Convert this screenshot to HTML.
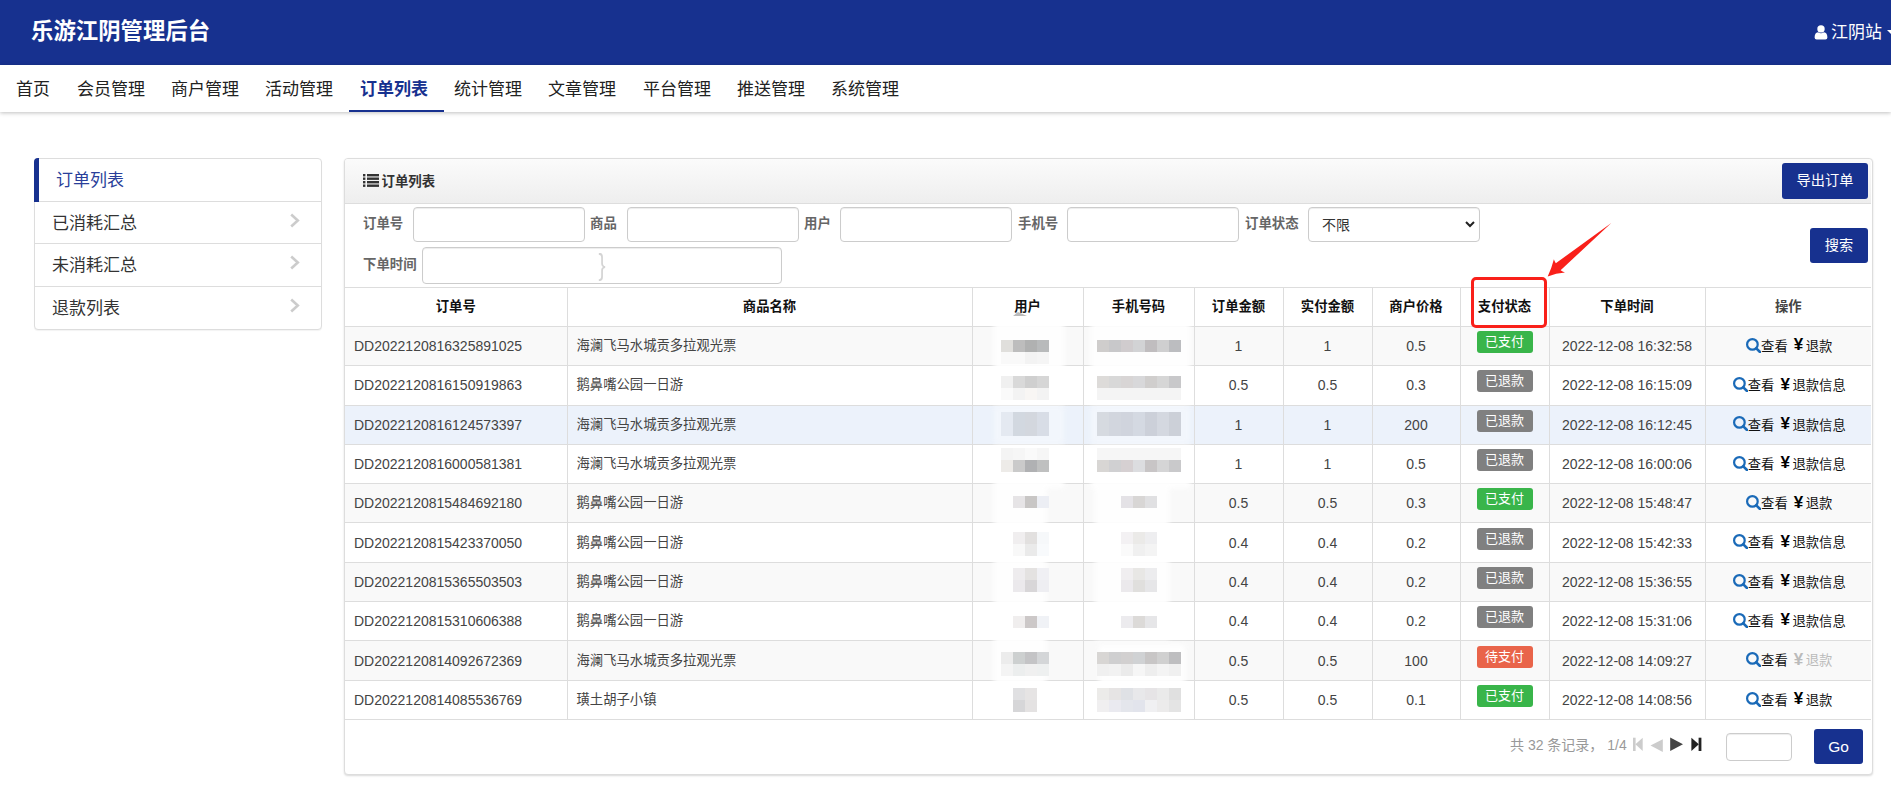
<!DOCTYPE html>
<html lang="zh-CN">
<head>
<meta charset="utf-8">
<title>乐游江阴管理后台</title>
<style>
*{box-sizing:border-box;margin:0;padding:0}
html,body{width:1891px;height:795px;overflow:hidden;background:#fff}
body{font-family:"Liberation Sans","Noto Sans CJK SC",sans-serif;font-size:14px;color:#333;position:relative}
.top{position:absolute;left:0;top:0;width:1891px;height:65px;background:#17318f}
.brand{position:absolute;left:31px;top:16px;font-size:22.4px;line-height:32px;font-weight:bold;color:#fff;letter-spacing:0px;white-space:nowrap}
.user{position:absolute;left:1831px;top:19px;font-size:17px;line-height:28px;color:#fff;white-space:nowrap}
.usericon{position:absolute;left:1813.5px;top:25px;width:14px;height:15px}
.caret{position:absolute;left:1887px;top:30px;width:8px;height:4px}
.nav{position:absolute;left:0;top:65px;width:1891px;height:47px;background:#fff;box-shadow:0 1px 4px rgba(0,0,0,.25)}
.nav a{position:absolute;top:1px;height:47px;line-height:47px;font-size:17px;color:#222;white-space:nowrap;text-decoration:none}
.nav a.on{color:#17318f;font-weight:bold}
.nav .bar{position:absolute;left:349px;top:44.5px;width:95px;height:2.5px;background:#17318f}
.side{position:absolute;left:34px;top:158px;width:288px;height:172px;border:1px solid #ddd;border-radius:4px;background:#fff;box-shadow:0 1px 1px rgba(0,0,0,.05);overflow:hidden}
.side div{position:relative;height:43px;line-height:44px;border-bottom:1px solid #ddd;font-size:17px;color:#333;padding-left:17px}
.side div:last-child{border-bottom:0}
.side div.on{color:#2a3f9a;padding-left:21px;height:43px}
.sbar{position:absolute;left:34px;top:158px;width:5px;height:44px;background:#17318f;border-radius:4px 0 0 0}
.side div svg{position:absolute;left:254px;top:11px;width:12px;height:15px}
.panel{position:absolute;left:344px;top:158px;width:1529px;height:617px;border:1px solid #ddd;border-radius:4px;background:#fff;box-shadow:0 1px 2px rgba(0,0,0,.15)}
.phead{position:absolute;left:0;top:0;width:1526px;height:45px;background:linear-gradient(#fbfbfb,#eee);border-bottom:1px solid #ddd;border-radius:3px 3px 0 0}
.phead b{position:absolute;left:36.5px;top:12px;font-size:13.4px;line-height:22px;color:#333}
.btn{position:absolute;background:#17318f;color:#fff;border-radius:3px;text-align:center;font-size:14.2px}
.lbl{position:absolute;font-size:13.4px;font-weight:bold;color:#666;line-height:20px;white-space:nowrap}
.inp{position:absolute;height:35px;border:1px solid #ccc;border-radius:4px;background:#fff;box-shadow:inset 0 1px 1px rgba(0,0,0,.075)}
table{position:absolute;left:0;top:128px;width:1526px;border-collapse:collapse;table-layout:fixed}
th,td{border:1px solid #ddd;height:39.3px;line-height:20px;font-size:13.33px;text-align:center;white-space:nowrap;overflow:hidden;padding:0}
th{font-weight:bold;color:#111;height:39px;padding-bottom:1px}
th.op{color:#444}
td{color:#444}
td.n{font-size:14px}
td.l{text-align:left;padding-left:9px}
tr td:first-child,tr th:first-child{border-left:0}
tr td:last-child,tr th:last-child{border-right:0}
tbody tr:nth-child(odd){background:#f9f9f9}
tbody tr.hl{background:#ecf2fb}
.tag{display:inline-block;width:56px;height:22px;line-height:21px;border-radius:3px;color:#fff;font-size:13px;position:relative;top:-4px}
.g{background:#39b54a}.k{background:#808080}.r{background:#e9644a}
.mz{display:inline-block;height:16px;background:#d4d4d4;vertical-align:middle}
.licon{position:absolute;left:17.5px;top:15px;width:16px;height:13px}
.sel span{position:absolute;left:13px;top:7px;font-size:14px;line-height:20px;color:#333}
.sel svg{position:absolute;right:4px;top:13px;width:10px;height:7px}
.brace{position:absolute;left:174px;top:1px;font-size:30px;line-height:32px;color:#d4d4d4;font-weight:normal;transform:scaleX(.7)}
.act .a{position:relative;top:1px;padding-left:2px;display:inline-flex;align-items:center;height:20px;line-height:20px;font-size:13.33px;color:#111}
.act .mag{width:15px;height:15px;flex:none;position:relative;top:0px}
.act span,.act em{font-style:normal;color:#111;position:relative;top:1.6px}
.act b{font-weight:bold;color:#000;font-size:17px;line-height:20px;margin-left:6px;margin-right:2.5px;position:relative;top:0px}
.act b.dis,.act em.dis{color:#bbb}
.pg{position:absolute;left:1165px;top:576px;font-size:14px;line-height:20px;color:#999;white-space:nowrap}
.pgi{position:absolute;left:1285px;top:576px;width:75px;height:18px}
.mosaic{position:absolute;left:972px;top:300px;width:230px;height:430px}
.redbox{position:absolute;left:1471px;top:277px;width:76px;height:51px;border:3px solid #f9201a;border-radius:5px}
.arrow{position:absolute;left:1540px;top:215px;width:80px;height:70px}
</style>
</head>
<body>
<div class="top">
  <div class="brand">乐游江阴管理后台</div>
  <svg class="usericon" viewBox="0 0 14 15"><circle cx="7" cy="3.9" r="3.7" fill="#fff"/><path d="M0.6 12.6 Q0.6 7.6 4 7.2 Q7 9.4 10 7.2 Q13.4 7.6 13.4 12.6 Q13.4 14.6 11.4 14.6 H2.6 Q0.6 14.6 0.6 12.6 Z" fill="#fff"/></svg><svg class="caret" viewBox="0 0 8 4"><path d="M0 0 H8 L4 4 Z" fill="#fff"/></svg>
  <div class="user">江阴站</div>
</div>
<div class="nav">
  <a style="left:16px">首页</a>
  <a style="left:77px">会员管理</a>
  <a style="left:171px">商户管理</a>
  <a style="left:265px">活动管理</a>
  <a class="on" style="left:360px">订单列表</a>
  <a style="left:454px">统计管理</a>
  <a style="left:548px">文章管理</a>
  <a style="left:643px">平台管理</a>
  <a style="left:737px">推送管理</a>
  <a style="left:831px">系统管理</a>
  <span class="bar"></span>
</div>
<div class="side">
  <div class="on">订单列表</div>
  <div style="height:42px">已消耗汇总<svg viewBox="0 0 12 15"><path d="M2.2 1.5 L8.8 7.5 L2.2 13.5" fill="none" stroke="#ccc" stroke-width="2.6"/></svg></div>
  <div>未消耗汇总<svg viewBox="0 0 12 15"><path d="M2.2 1.5 L8.8 7.5 L2.2 13.5" fill="none" stroke="#ccc" stroke-width="2.6"/></svg></div>
  <div style="height:42px">退款列表<svg viewBox="0 0 12 15"><path d="M2.2 1.5 L8.8 7.5 L2.2 13.5" fill="none" stroke="#ccc" stroke-width="2.6"/></svg></div>
</div>
<div class="sbar"></div>
<div class="panel">
  <div class="phead"><b>订单列表</b></div>
  <svg class="licon" viewBox="0 0 16 13"><g fill="#333"><rect x="0" y="0" width="2.4" height="2.4"/><rect x="4" y="0" width="12" height="2.4"/><rect x="0" y="3.5" width="2.4" height="2.4"/><rect x="4" y="3.5" width="12" height="2.4"/><rect x="0" y="7" width="2.4" height="2.4"/><rect x="4" y="7" width="12" height="2.4"/><rect x="0" y="10.5" width="2.4" height="2.4"/><rect x="4" y="10.5" width="12" height="2.4"/></g></svg>
  <div class="btn" style="left:1437px;top:4px;width:86px;height:36px;line-height:35px">导出订单</div>
  <div class="lbl" style="left:18px;top:55px">订单号</div><div class="inp" style="left:68px;top:48px;width:172px"></div>
  <div class="lbl" style="left:245px;top:55px">商品</div><div class="inp" style="left:282px;top:48px;width:172px"></div>
  <div class="lbl" style="left:459px;top:55px">用户</div><div class="inp" style="left:495px;top:48px;width:172px"></div>
  <div class="lbl" style="left:673px;top:55px">手机号</div><div class="inp" style="left:722px;top:48px;width:172px"></div>
  <div class="lbl" style="left:900px;top:55px">订单状态</div>
  <div class="inp sel" style="left:963px;top:48px;width:172px"><span>不限</span><svg viewBox="0 0 10 7"><path d="M1 1 L5 5 L9 1" fill="none" stroke="#222" stroke-width="2"/></svg></div>
  <div class="lbl" style="left:18px;top:96px">下单时间</div>
  <div class="inp" style="left:77px;top:88px;width:360px;height:37px"><span class="brace">}</span></div>
  <div class="btn" style="left:1465px;top:69px;width:58px;height:35px;line-height:34px">搜索</div>
  <table>
  <colgroup><col style="width:222px"><col style="width:405px"><col style="width:111px"><col style="width:111px"><col style="width:89px"><col style="width:89px"><col style="width:88px"><col style="width:89px"><col style="width:156px"><col style="width:166px"></colgroup>
  <thead><tr><th>订单号</th><th>商品名称</th><th>用户</th><th>手机号码</th><th>订单金额</th><th>实付金额</th><th>商户价格</th><th>支付状态</th><th>下单时间</th><th class="op">操作</th></tr></thead>
  <tbody>
    <tr><td class="l n">DD2022120816325891025</td><td class="l">海澜飞马水城贡多拉观光票</td><td></td><td></td><td class="n">1</td><td class="n">1</td><td class="n">0.5</td><td><span class="tag g">已支付</span></td><td class="n">2022-12-08 16:32:58</td><td class="act"><div class="a"><svg class="mag" viewBox="0 0 15 15"><circle cx="6.4" cy="6.4" r="5.3" fill="none" stroke="#1a6ab8" stroke-width="2.2"/><path d="M10.3 10.3 L14 14" stroke="#1a6ab8" stroke-width="2.6" stroke-linecap="round"/></svg><span>查看</span><b>¥</b><em>退款</em></div></td></tr>
    <tr><td class="l n">DD2022120816150919863</td><td class="l">鹅鼻嘴公园一日游</td><td></td><td></td><td class="n">0.5</td><td class="n">0.5</td><td class="n">0.3</td><td><span class="tag k">已退款</span></td><td class="n">2022-12-08 16:15:09</td><td class="act"><div class="a"><svg class="mag" viewBox="0 0 15 15"><circle cx="6.4" cy="6.4" r="5.3" fill="none" stroke="#1a6ab8" stroke-width="2.2"/><path d="M10.3 10.3 L14 14" stroke="#1a6ab8" stroke-width="2.6" stroke-linecap="round"/></svg><span>查看</span><b>¥</b><em>退款信息</em></div></td></tr>
    <tr class="hl"><td class="l n">DD2022120816124573397</td><td class="l">海澜飞马水城贡多拉观光票</td><td></td><td></td><td class="n">1</td><td class="n">1</td><td class="n">200</td><td><span class="tag k">已退款</span></td><td class="n">2022-12-08 16:12:45</td><td class="act"><div class="a"><svg class="mag" viewBox="0 0 15 15"><circle cx="6.4" cy="6.4" r="5.3" fill="none" stroke="#1a6ab8" stroke-width="2.2"/><path d="M10.3 10.3 L14 14" stroke="#1a6ab8" stroke-width="2.6" stroke-linecap="round"/></svg><span>查看</span><b>¥</b><em>退款信息</em></div></td></tr>
    <tr><td class="l n">DD2022120816000581381</td><td class="l">海澜飞马水城贡多拉观光票</td><td></td><td></td><td class="n">1</td><td class="n">1</td><td class="n">0.5</td><td><span class="tag k">已退款</span></td><td class="n">2022-12-08 16:00:06</td><td class="act"><div class="a"><svg class="mag" viewBox="0 0 15 15"><circle cx="6.4" cy="6.4" r="5.3" fill="none" stroke="#1a6ab8" stroke-width="2.2"/><path d="M10.3 10.3 L14 14" stroke="#1a6ab8" stroke-width="2.6" stroke-linecap="round"/></svg><span>查看</span><b>¥</b><em>退款信息</em></div></td></tr>
    <tr><td class="l n">DD2022120815484692180</td><td class="l">鹅鼻嘴公园一日游</td><td></td><td></td><td class="n">0.5</td><td class="n">0.5</td><td class="n">0.3</td><td><span class="tag g">已支付</span></td><td class="n">2022-12-08 15:48:47</td><td class="act"><div class="a"><svg class="mag" viewBox="0 0 15 15"><circle cx="6.4" cy="6.4" r="5.3" fill="none" stroke="#1a6ab8" stroke-width="2.2"/><path d="M10.3 10.3 L14 14" stroke="#1a6ab8" stroke-width="2.6" stroke-linecap="round"/></svg><span>查看</span><b>¥</b><em>退款</em></div></td></tr>
    <tr><td class="l n">DD2022120815423370050</td><td class="l">鹅鼻嘴公园一日游</td><td></td><td></td><td class="n">0.4</td><td class="n">0.4</td><td class="n">0.2</td><td><span class="tag k">已退款</span></td><td class="n">2022-12-08 15:42:33</td><td class="act"><div class="a"><svg class="mag" viewBox="0 0 15 15"><circle cx="6.4" cy="6.4" r="5.3" fill="none" stroke="#1a6ab8" stroke-width="2.2"/><path d="M10.3 10.3 L14 14" stroke="#1a6ab8" stroke-width="2.6" stroke-linecap="round"/></svg><span>查看</span><b>¥</b><em>退款信息</em></div></td></tr>
    <tr><td class="l n">DD2022120815365503503</td><td class="l">鹅鼻嘴公园一日游</td><td></td><td></td><td class="n">0.4</td><td class="n">0.4</td><td class="n">0.2</td><td><span class="tag k">已退款</span></td><td class="n">2022-12-08 15:36:55</td><td class="act"><div class="a"><svg class="mag" viewBox="0 0 15 15"><circle cx="6.4" cy="6.4" r="5.3" fill="none" stroke="#1a6ab8" stroke-width="2.2"/><path d="M10.3 10.3 L14 14" stroke="#1a6ab8" stroke-width="2.6" stroke-linecap="round"/></svg><span>查看</span><b>¥</b><em>退款信息</em></div></td></tr>
    <tr><td class="l n">DD2022120815310606388</td><td class="l">鹅鼻嘴公园一日游</td><td></td><td></td><td class="n">0.4</td><td class="n">0.4</td><td class="n">0.2</td><td><span class="tag k">已退款</span></td><td class="n">2022-12-08 15:31:06</td><td class="act"><div class="a"><svg class="mag" viewBox="0 0 15 15"><circle cx="6.4" cy="6.4" r="5.3" fill="none" stroke="#1a6ab8" stroke-width="2.2"/><path d="M10.3 10.3 L14 14" stroke="#1a6ab8" stroke-width="2.6" stroke-linecap="round"/></svg><span>查看</span><b>¥</b><em>退款信息</em></div></td></tr>
    <tr><td class="l n">DD2022120814092672369</td><td class="l">海澜飞马水城贡多拉观光票</td><td></td><td></td><td class="n">0.5</td><td class="n">0.5</td><td class="n">100</td><td><span class="tag r">待支付</span></td><td class="n">2022-12-08 14:09:27</td><td class="act"><div class="a"><svg class="mag" viewBox="0 0 15 15"><circle cx="6.4" cy="6.4" r="5.3" fill="none" stroke="#1a6ab8" stroke-width="2.2"/><path d="M10.3 10.3 L14 14" stroke="#1a6ab8" stroke-width="2.6" stroke-linecap="round"/></svg><span>查看</span><b class="dis">¥</b><em class="dis">退款</em></div></td></tr>
    <tr><td class="l n">DD2022120814085536769</td><td class="l">璜土胡子小镇</td><td></td><td></td><td class="n">0.5</td><td class="n">0.5</td><td class="n">0.1</td><td><span class="tag g">已支付</span></td><td class="n">2022-12-08 14:08:56</td><td class="act"><div class="a"><svg class="mag" viewBox="0 0 15 15"><circle cx="6.4" cy="6.4" r="5.3" fill="none" stroke="#1a6ab8" stroke-width="2.2"/><path d="M10.3 10.3 L14 14" stroke="#1a6ab8" stroke-width="2.6" stroke-linecap="round"/></svg><span>查看</span><b>¥</b><em>退款</em></div></td></tr>
  </tbody></table>
  <div class="pg">共 32 条记录， 1/4</div>
  <svg class="pgi" viewBox="1630 735 75 18"><g fill="#ccc"><rect x="1633" y="737.7" width="2.6" height="13.3"/><path d="M1642.7 737.7 L1635.4 744.3 L1642.7 751 Z"/><path d="M1662.8 739.2 L1650.5 745.6 L1662.8 752 Z"/></g><path d="M1670.2 737.5 L1683 744.2 L1670.2 751 Z" fill="#444"/><g fill="#222"><path d="M1691.4 737.7 L1698.8 744.3 L1691.4 751 Z"/><rect x="1698.6" y="737.7" width="2.8" height="13.3"/></g></svg>
  <div class="inp" style="left:1381px;top:574px;width:66px;height:28px"></div>
  <div class="btn" style="left:1469px;top:570px;width:49px;height:35px;line-height:36px;font-size:15.5px">Go</div>
</div>
<svg class="mosaic" viewBox="972 300 230 430">
<defs><filter id="hz" x="-10%" y="-10%" width="120%" height="120%"><feGaussianBlur stdDeviation="2.5"/></filter></defs>
<g filter="url(#hz)" fill="#fff" opacity=".92">
<rect x="994" y="316" width="70" height="88"/>
<rect x="994" y="446" width="70" height="42"/>
<rect x="994" y="488" width="52" height="228"/>
<rect x="1091" y="322" width="99" height="82"/>
<rect x="1091" y="446" width="99" height="42"/>
<rect x="1095" y="488" width="74" height="152"/>
<rect x="1099" y="645" width="86" height="72"/>
</g>
<g filter="url(#hz)" fill="#fff" opacity=".35">
<rect x="994" y="406" width="70" height="38"/>
<rect x="1091" y="406" width="99" height="38"/>
</g>
<path d="M1013 316 L1018 312 L1027 316 Z" fill="#bbb"/>
<rect x="1001" y="340" width="12" height="12" fill="#e0dfdc"/>
<rect x="1013" y="340" width="12" height="12" fill="#bdbdbd"/>
<rect x="1025" y="340" width="12" height="12" fill="#b0b1b1"/>
<rect x="1037" y="340" width="12" height="12" fill="#b8babb"/>
<rect x="1001" y="352" width="12" height="12" fill="#f9f9f9"/>
<rect x="1013" y="352" width="12" height="12" fill="#f9f9f9"/>
<rect x="1025" y="352" width="12" height="12" fill="#f3f3f3"/>
<rect x="1037" y="352" width="12" height="12" fill="#f5f5f5"/>
<rect x="1097" y="340" width="12" height="12" fill="#cfcdcc"/>
<rect x="1109" y="340" width="12" height="12" fill="#c8c8ca"/>
<rect x="1121" y="340" width="12" height="12" fill="#d0ccce"/>
<rect x="1133" y="340" width="12" height="12" fill="#d2d3d5"/>
<rect x="1145" y="340" width="12" height="12" fill="#c0bdbf"/>
<rect x="1157" y="340" width="12" height="12" fill="#cfcfd0"/>
<rect x="1169" y="340" width="12" height="12" fill="#bcbdc0"/>
<rect x="1001" y="376" width="12" height="12" fill="#f0f0f0"/>
<rect x="1013" y="376" width="12" height="12" fill="#d9d9d9"/>
<rect x="1025" y="376" width="12" height="12" fill="#cfcfcf"/>
<rect x="1037" y="376" width="12" height="12" fill="#d6d6d6"/>
<rect x="1001" y="388" width="12" height="12" fill="#fafafa"/>
<rect x="1013" y="388" width="12" height="12" fill="#f3f3f3"/>
<rect x="1025" y="388" width="12" height="12" fill="#f8f6f4"/>
<rect x="1037" y="388" width="12" height="12" fill="#f3f3f3"/>
<rect x="1097" y="376" width="12" height="12" fill="#dddbd9"/>
<rect x="1109" y="376" width="12" height="12" fill="#d8d8d8"/>
<rect x="1121" y="376" width="12" height="12" fill="#d8d5d5"/>
<rect x="1133" y="376" width="12" height="12" fill="#d8d8da"/>
<rect x="1145" y="376" width="12" height="12" fill="#d0cecd"/>
<rect x="1157" y="376" width="12" height="12" fill="#d6d6d6"/>
<rect x="1169" y="376" width="12" height="12" fill="#c8c8ca"/>
<rect x="1097" y="388" width="12" height="12" fill="#f4f4f4"/>
<rect x="1109" y="388" width="12" height="12" fill="#f4f4f4"/>
<rect x="1121" y="388" width="12" height="12" fill="#f4f4f4"/>
<rect x="1133" y="388" width="12" height="12" fill="#f4f4f4"/>
<rect x="1145" y="388" width="12" height="12" fill="#f4f4f4"/>
<rect x="1157" y="388" width="12" height="12" fill="#f4f4f4"/>
<rect x="1169" y="388" width="12" height="12" fill="#f4f4f4"/>
<rect x="1001" y="412" width="12" height="12" fill="#e4e9f1"/>
<rect x="1013" y="412" width="12" height="12" fill="#d2d8e0"/>
<rect x="1025" y="412" width="12" height="12" fill="#d3d7de"/>
<rect x="1037" y="412" width="12" height="12" fill="#d8dde6"/>
<rect x="1097" y="412" width="12" height="12" fill="#d6dae0"/>
<rect x="1109" y="412" width="12" height="12" fill="#d2d6de"/>
<rect x="1121" y="412" width="12" height="12" fill="#d0d4dd"/>
<rect x="1133" y="412" width="12" height="12" fill="#d4d9e2"/>
<rect x="1145" y="412" width="12" height="12" fill="#ccd0d9"/>
<rect x="1157" y="412" width="12" height="12" fill="#d4d8e0"/>
<rect x="1169" y="412" width="12" height="12" fill="#ccd0d8"/>
<rect x="1001" y="424" width="12" height="12" fill="#e4e9f1"/>
<rect x="1013" y="424" width="12" height="12" fill="#d2d8e0"/>
<rect x="1025" y="424" width="12" height="12" fill="#d3d7de"/>
<rect x="1037" y="424" width="12" height="12" fill="#d8dde6"/>
<rect x="1097" y="424" width="12" height="12" fill="#d6dae0"/>
<rect x="1109" y="424" width="12" height="12" fill="#d2d6de"/>
<rect x="1121" y="424" width="12" height="12" fill="#d0d4dd"/>
<rect x="1133" y="424" width="12" height="12" fill="#d4d9e2"/>
<rect x="1145" y="424" width="12" height="12" fill="#ccd0d9"/>
<rect x="1157" y="424" width="12" height="12" fill="#d4d8e0"/>
<rect x="1169" y="424" width="12" height="12" fill="#ccd0d8"/>
<rect x="1001" y="448" width="12" height="12" fill="#f4f4f4"/>
<rect x="1013" y="448" width="12" height="12" fill="#f6f6f6"/>
<rect x="1025" y="448" width="12" height="12" fill="#fafafa"/>
<rect x="1037" y="448" width="12" height="12" fill="#f6f6f6"/>
<rect x="1001" y="460" width="12" height="12" fill="#edebe8"/>
<rect x="1013" y="460" width="12" height="12" fill="#cacaca"/>
<rect x="1025" y="460" width="12" height="12" fill="#b0b1b3"/>
<rect x="1037" y="460" width="12" height="12" fill="#bfc0c0"/>
<rect x="1097" y="448" width="12" height="12" fill="#f6f6f6"/>
<rect x="1109" y="448" width="12" height="12" fill="#f6f6f6"/>
<rect x="1121" y="448" width="12" height="12" fill="#f6f6f6"/>
<rect x="1133" y="448" width="12" height="12" fill="#f6f6f6"/>
<rect x="1145" y="448" width="12" height="12" fill="#f6f6f6"/>
<rect x="1157" y="448" width="12" height="12" fill="#f6f6f6"/>
<rect x="1169" y="448" width="12" height="12" fill="#f6f6f6"/>
<rect x="1097" y="460" width="12" height="12" fill="#d8d6d4"/>
<rect x="1109" y="460" width="12" height="12" fill="#d0d0d2"/>
<rect x="1121" y="460" width="12" height="12" fill="#d6d0d2"/>
<rect x="1133" y="460" width="12" height="12" fill="#dcdde0"/>
<rect x="1145" y="460" width="12" height="12" fill="#c8c5c6"/>
<rect x="1157" y="460" width="12" height="12" fill="#d5d5d6"/>
<rect x="1169" y="460" width="12" height="12" fill="#c9c9cb"/>
<rect x="1013" y="496" width="12" height="12" fill="#e6e4e6"/>
<rect x="1025" y="496" width="12" height="12" fill="#c8c6c5"/>
<rect x="1037" y="496" width="12" height="12" fill="#eceef4"/>
<rect x="1121" y="496" width="12" height="12" fill="#e4e2e6"/>
<rect x="1133" y="496" width="12" height="12" fill="#d8d6d5"/>
<rect x="1145" y="496" width="12" height="12" fill="#e0e0e2"/>
<rect x="1013" y="532" width="12" height="12" fill="#f0eeef"/>
<rect x="1025" y="532" width="12" height="12" fill="#e2e0df"/>
<rect x="1037" y="532" width="12" height="12" fill="#f6f8fa"/>
<rect x="1013" y="544" width="12" height="12" fill="#f8f8f8"/>
<rect x="1025" y="544" width="12" height="12" fill="#eaeaea"/>
<rect x="1037" y="544" width="12" height="12" fill="#f8fafc"/>
<rect x="1121" y="532" width="12" height="12" fill="#f3f1f3"/>
<rect x="1133" y="532" width="12" height="12" fill="#ebeae8"/>
<rect x="1145" y="532" width="12" height="12" fill="#eeeef0"/>
<rect x="1121" y="544" width="12" height="12" fill="#fafafa"/>
<rect x="1133" y="544" width="12" height="12" fill="#f0f0f0"/>
<rect x="1145" y="544" width="12" height="12" fill="#f4f4f4"/>
<rect x="1013" y="568" width="12" height="12" fill="#eeecee"/>
<rect x="1025" y="568" width="12" height="12" fill="#e4e2e1"/>
<rect x="1037" y="568" width="12" height="12" fill="#f0f0f4"/>
<rect x="1013" y="580" width="12" height="12" fill="#ebe9ec"/>
<rect x="1025" y="580" width="12" height="12" fill="#d8d6d8"/>
<rect x="1037" y="580" width="12" height="12" fill="#eeeef2"/>
<rect x="1121" y="568" width="12" height="12" fill="#f0eef0"/>
<rect x="1133" y="568" width="12" height="12" fill="#e8e7e5"/>
<rect x="1145" y="568" width="12" height="12" fill="#ececee"/>
<rect x="1121" y="580" width="12" height="12" fill="#ebe9ec"/>
<rect x="1133" y="580" width="12" height="12" fill="#e0dfdd"/>
<rect x="1145" y="580" width="12" height="12" fill="#e6e6e8"/>
<rect x="1013" y="616" width="12" height="12" fill="#f0eeee"/>
<rect x="1025" y="616" width="12" height="12" fill="#ccc8c8"/>
<rect x="1037" y="616" width="12" height="12" fill="#f0f2f6"/>
<rect x="1121" y="616" width="12" height="12" fill="#ecebee"/>
<rect x="1133" y="616" width="12" height="12" fill="#dcdad8"/>
<rect x="1145" y="616" width="12" height="12" fill="#e6e6e8"/>
<rect x="1001" y="652" width="12" height="12" fill="#ececec"/>
<rect x="1013" y="652" width="12" height="12" fill="#cdd0d0"/>
<rect x="1025" y="652" width="12" height="12" fill="#c4c4c6"/>
<rect x="1037" y="652" width="12" height="12" fill="#d4d6d8"/>
<rect x="1001" y="664" width="12" height="12" fill="#f4f4f4"/>
<rect x="1013" y="664" width="12" height="12" fill="#eceeee"/>
<rect x="1025" y="664" width="12" height="12" fill="#f0f0f0"/>
<rect x="1037" y="664" width="12" height="12" fill="#eef0f0"/>
<rect x="1097" y="652" width="12" height="12" fill="#d8d6d4"/>
<rect x="1109" y="652" width="12" height="12" fill="#cfcfd0"/>
<rect x="1121" y="652" width="12" height="12" fill="#d2d0d0"/>
<rect x="1133" y="652" width="12" height="12" fill="#d0d2d4"/>
<rect x="1145" y="652" width="12" height="12" fill="#c8c6c6"/>
<rect x="1157" y="652" width="12" height="12" fill="#d0d0d0"/>
<rect x="1169" y="652" width="12" height="12" fill="#bebec0"/>
<rect x="1097" y="664" width="12" height="12" fill="#f0f0f0"/>
<rect x="1109" y="664" width="12" height="12" fill="#f2f2f2"/>
<rect x="1121" y="664" width="12" height="12" fill="#ebebeb"/>
<rect x="1133" y="664" width="12" height="12" fill="#f6f6f6"/>
<rect x="1145" y="664" width="12" height="12" fill="#eeeeee"/>
<rect x="1157" y="664" width="12" height="12" fill="#f4f4f4"/>
<rect x="1169" y="664" width="12" height="12" fill="#f0f0f0"/>
<rect x="1013" y="688" width="12" height="12" fill="#e0e0e2"/>
<rect x="1025" y="688" width="12" height="12" fill="#e6e4e4"/>
<rect x="1013" y="700" width="12" height="12" fill="#d6d6d8"/>
<rect x="1025" y="700" width="12" height="12" fill="#e4e2e2"/>
<rect x="1097" y="688" width="12" height="12" fill="#ecebe9"/>
<rect x="1109" y="688" width="12" height="12" fill="#e6e4e4"/>
<rect x="1121" y="688" width="12" height="12" fill="#dfe1e5"/>
<rect x="1133" y="688" width="12" height="12" fill="#e8e8ea"/>
<rect x="1145" y="688" width="12" height="12" fill="#e6e4e6"/>
<rect x="1157" y="688" width="12" height="12" fill="#eaeaea"/>
<rect x="1169" y="688" width="12" height="12" fill="#e0e0e0"/>
<rect x="1097" y="700" width="12" height="12" fill="#f0eff0"/>
<rect x="1109" y="700" width="12" height="12" fill="#eaeaf0"/>
<rect x="1121" y="700" width="12" height="12" fill="#e4e6ec"/>
<rect x="1133" y="700" width="12" height="12" fill="#e2e4ec"/>
<rect x="1145" y="700" width="12" height="12" fill="#f0f0f2"/>
<rect x="1157" y="700" width="12" height="12" fill="#ecebeb"/>
<rect x="1169" y="700" width="12" height="12" fill="#e4e4e4"/>
</svg>
<div class="redbox"></div>
<svg class="arrow" viewBox="1540 215 80 70"><path d="M1611.3 222.9 L1555.8 263.3 Q1554.6 261.5 1553.9 259.2 Q1551.5 268.5 1547.7 276.4 Q1556 273.4 1565 272.6 Q1562.5 271.8 1560.6 270.3 Z" fill="#f9201a"/></svg>
</body>
</html>
